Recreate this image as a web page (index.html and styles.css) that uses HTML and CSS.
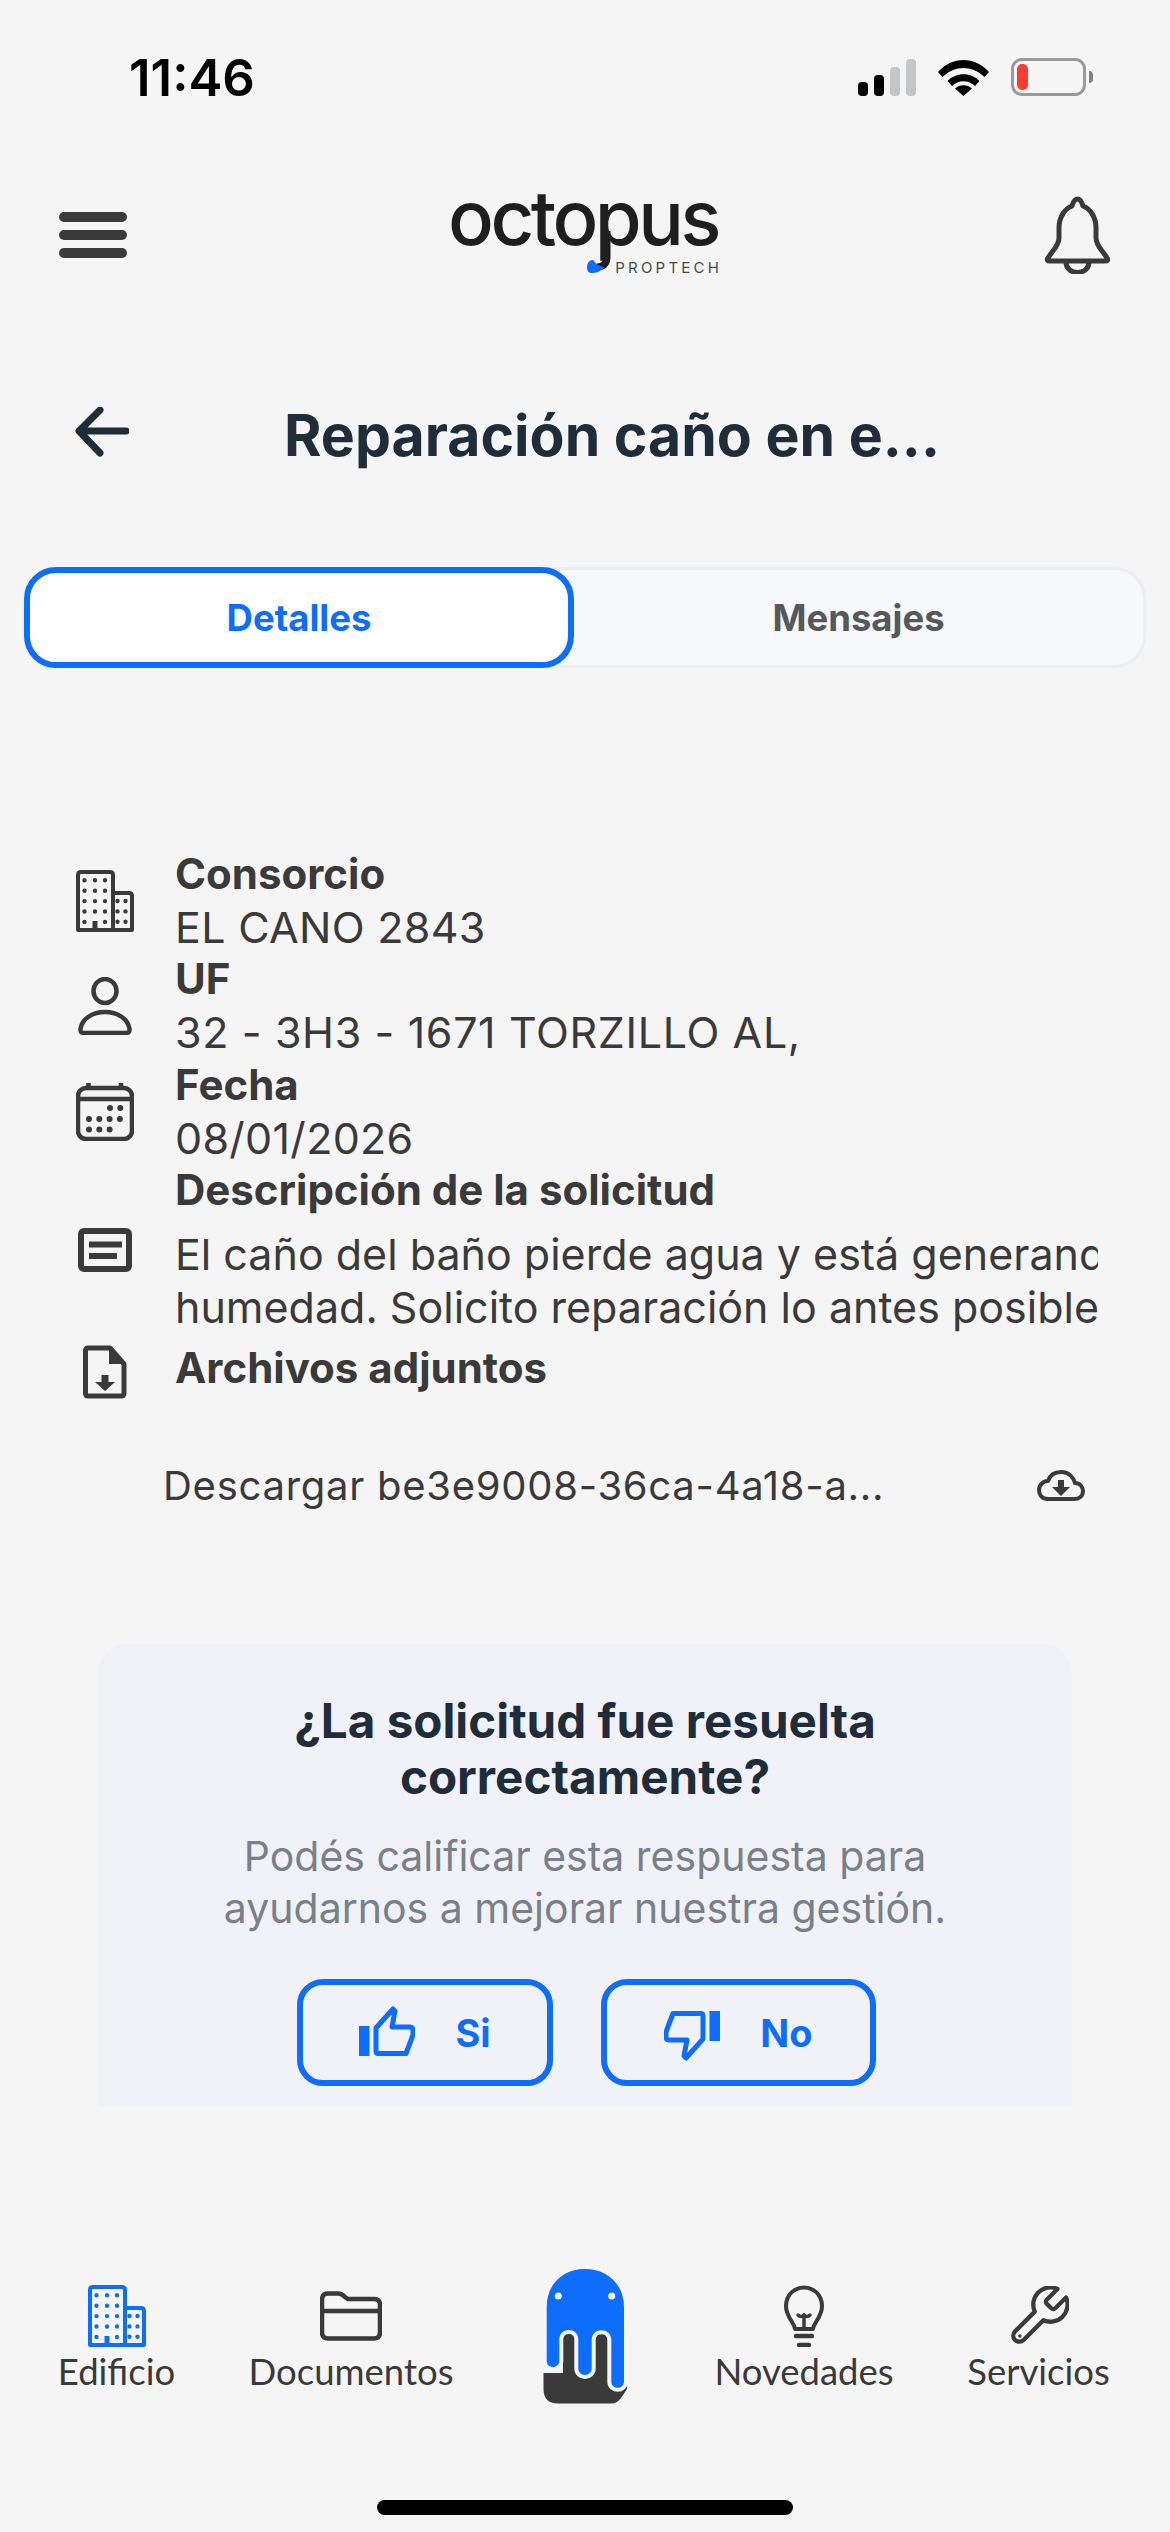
FILE: index.html
```html
<!DOCTYPE html>
<html lang="es">
<head>
    <meta charset="UTF-8">
    <meta name="viewport" content="width=device-width, initial-scale=1.0">
    <title>Reparación caño</title>
    <link rel="stylesheet" href="styles.css">
</head>
<body>

<svg class="defs" width="0" height="0">
    <symbol id="building" viewBox="0 0 58 62">
        <g fill="none" stroke="currentColor" stroke-width="4" stroke-linejoin="round">
            <path d="M2 60V5q0-3 3-3h29q3 0 3 3v55z"/>
            <path d="M37 23h16q3 0 3 3v34H37"/>
            <path d="M2 60h54"/>
        </g>
        <g fill="none" stroke="currentColor" stroke-width="4.4" stroke-linecap="round" stroke-dasharray="0 10.4">
            <path d="M8.500 10.300V53"/>
            <path d="M19 10.300V43"/>
            <path d="M29 10.300V53"/>
            <path d="M41.500 31V53"/>
            <path d="M49.500 31V53"/>
        </g>
        <path d="M16.500 60V51h5v9z" fill="currentColor"/>
    </symbol>
</svg>

<div class="screen">

    <div class="status-bar">
        <span class="time">11:46</span>
        <div class="status-icons">
            <div class="signal">
                <span class="bar bar-1"></span>
                <span class="bar bar-2"></span>
                <span class="bar bar-3"></span>
                <span class="bar bar-4"></span>
            </div>
            <svg class="wifi" viewBox="0 0 51 37" width="51" height="37">
                <path d="M0 13C14-3 37-3 51 13l-4.500 5C34 6 17 6 4.500 18z" fill="#000"/>
                <path d="M9.500 22C18 13 33 13 41.500 22L37 27C30.500 20.500 20.500 20.500 14 27z" fill="#000"/>
                <path d="M25.500 37L17 29.500C21.500 25 29.500 25 34 29.500z" fill="#000"/>
            </svg>
            <div class="battery"><span class="battery-level"></span></div>
            <span class="battery-tip"></span>
        </div>
    </div>

    <header class="topbar">
        <div class="menu-icon"><span></span><span></span><span></span></div>
        <div class="logo">
            <span class="logo-word">octopus</span>
            <svg class="logo-tail" viewBox="0 0 28 42" width="28" height="42">
                <path d="M21 0V26C21 33 17 36 11 36" fill="none" stroke="#1e1e1e" stroke-width="7"/>
                <path d="M1 37C1 31 4 29 7 29C10 33 13 35 18 36C15 41 9 42 6 42C3 42 1 40 1 37z" fill="#0d6efd"/>
            </svg>
            <span class="logo-sub">PROPTECH</span>
        </div>
        <svg class="bell" viewBox="0 0 69 78" width="69" height="78">
            <path d="M34.500 3C38 3 39 7 40 10C48 13 53 22 53 32V42C53 50 60 55 64 62Q66 65 62 65H7Q3 65 5 62C9 55 16 50 16 42V32C16 22 21 13 29 10C30 7 31 3 34.500 3z" fill="none" stroke="#3a3a3a" stroke-width="5" stroke-linejoin="round"/>
            <path d="M23 66C23 80 46 80 46 66" fill="none" stroke="#3a3a3a" stroke-width="5"/>
        </svg>
    </header>

    <div class="title-row">
        <svg class="back" viewBox="0 0 54 50" width="54" height="50">
            <path d="M51 24H5M25 3L4 24l21 22" fill="none" stroke="#1f2d3a" stroke-width="7" stroke-linecap="round" stroke-linejoin="round"/>
        </svg>
        <h1>Reparación caño en e...</h1>
    </div>

    <div class="tabs">
        <div class="tab tab-active">Detalles</div>
        <div class="tab">Mensajes</div>
    </div>

    <div class="details">
        <div class="row">
            <div class="row-icon"><svg width="58" height="62"><use href="#building"/></svg></div>
            <div class="row-text">
                <div class="label">Consorcio</div>
                <div class="value spaced-sm">EL CANO 2843</div>
            </div>
        </div>
        <div class="row">
            <div class="row-icon">
                <svg viewBox="0 0 54 58" width="54" height="58">
                    <ellipse cx="27" cy="14" rx="11.500" ry="12" fill="none" stroke="#3a3a3a" stroke-width="4.500"/>
                    <path d="M2.500 52C4 42 14 35 27 35S50 42 51.500 52Q52 56 48 56H6Q2 56 2.500 52z" fill="none" stroke="#3a3a3a" stroke-width="4.500" stroke-linejoin="round"/>
                </svg>
            </div>
            <div class="row-text">
                <div class="label">UF</div>
                <div class="value spaced">32 - 3H3 - 1671 TORZILLO AL,</div>
            </div>
        </div>
        <div class="row">
            <div class="row-icon">
                <svg viewBox="0 0 58 58" width="58" height="58">
                    <rect x="2" y="5" width="54" height="51" rx="8" fill="none" stroke="#3a3a3a" stroke-width="4.500"/>
                    <path d="M2 16H56M12.500 0V6M45 0V6" fill="none" stroke="#3a3a3a" stroke-width="4.500"/>
                    <g fill="none" stroke="#3a3a3a" stroke-width="6" stroke-linecap="round" stroke-dasharray="0 10.300">
                        <path d="M34 25H45"/>
                        <path d="M13 36H45"/>
                        <path d="M13 46.500H35"/>
                    </g>
                </svg>
            </div>
            <div class="row-text">
                <div class="label">Fecha</div>
                <div class="value spaced-sm">08/01/2026</div>
            </div>
        </div>
        <div class="row">
            <div class="row-icon"></div>
            <div class="row-text"><div class="label">Descripción de la solicitud</div></div>
        </div>
        <div class="row row-desc">
            <div class="row-icon">
                <svg viewBox="0 0 54 44" width="54" height="44">
                    <rect x="3" y="3" width="48" height="38" rx="3" fill="none" stroke="#3a3a3a" stroke-width="6"/>
                    <path d="M11 16.500H44M11 28H39" fill="none" stroke="#3a3a3a" stroke-width="6"/>
                </svg>
            </div>
            <div class="row-text">
                <div class="value clipped">El caño del baño pierde agua y está generando</div>
                <div class="value clipped">humedad. Solicito reparación lo antes posible.</div>
            </div>
        </div>
        <div class="row row-files">
            <div class="row-icon">
                <svg viewBox="0 0 44 54" width="44" height="54">
                    <path d="M5 3H27L41 19V48Q41 51 38 51H5Q2.500 51 2.500 48V6Q2.500 3 5 3z" fill="none" stroke="#3a3a3a" stroke-width="5" stroke-linejoin="round"/>
                    <path d="M26 3L41 19H26z" fill="#3a3a3a"/>
                    <path d="M18.500 30H25.500V37H32L22 46L12 37H18.500z" fill="#3a3a3a"/>
                </svg>
            </div>
            <div class="row-text"><div class="label">Archivos adjuntos</div></div>
        </div>
    </div>

    <div class="download">
        <span>Descargar be3e9008-36ca-4a18-a...</span>
        <svg viewBox="0 0 48 32" width="48" height="32">
            <path d="M13 29H11C5 29 2 25 2 20C2 15 6 11 11 11C13 5 18 2 24 2C32 2 37 8 38 13C43 13 46 17 46 21C46 26 42 29 37 29z" fill="none" stroke="#3a3a3a" stroke-width="4" stroke-linejoin="round"/>
            <path d="M21 10H27V17H33L24 26L15 17H21z" fill="#3a3a3a"/>
        </svg>
    </div>

    <section class="rating">
        <h2>¿La solicitud fue resuelta<br>correctamente?</h2>
        <p>Podés calificar esta respuesta para<br>ayudarnos a mejorar nuestra gestión.</p>
        <div class="rating-buttons">
            <button class="rate-btn rate-yes">
                <svg viewBox="0 0 56 50" width="56" height="50">
                    <path d="M0 20H10.500V50H0z" fill="#0d6efd"/>
                    <path d="M17 22L34 3L36 5L33 21H51Q54 21 54 25V29L47 47.500H19Q17 47.500 17 45z" fill="none" stroke="#0d6efd" stroke-width="5" stroke-linejoin="round"/>
                </svg>
                <span>Si</span>
            </button>
            <button class="rate-btn rate-no">
                <svg class="flip" viewBox="0 0 56 50" width="56" height="50">
                    <path d="M0 20H10.500V50H0z" fill="#0d6efd"/>
                    <path d="M17 22L34 3L36 5L33 21H51Q54 21 54 25V29L47 47.500H19Q17 47.500 17 45z" fill="none" stroke="#0d6efd" stroke-width="5" stroke-linejoin="round"/>
                </svg>
                <span>No</span>
            </button>
        </div>
    </section>

    <nav class="bottom-nav">
        <div class="nav-item nav-active">
            <div class="nav-icon"><svg width="58" height="62"><use href="#building"/></svg></div>
            <span>Edificio</span>
        </div>
        <div class="nav-item">
            <div class="nav-icon">
                <svg viewBox="0 0 62 50" width="62" height="50">
                    <path d="M2 41V9Q2 2.500 8 2.500H18Q22 2.500 25 6L28 8H54Q60 8 60 14V41Q60 47.500 54 47.500H8Q2 47.500 2 41z" fill="none" stroke="#3a3a3a" stroke-width="4.500"/>
                    <path d="M2 20H60" fill="none" stroke="#3a3a3a" stroke-width="4.500"/>
                </svg>
            </div>
            <span>Documentos</span>
        </div>
        <div class="nav-item nav-mascot">
            <svg viewBox="0 0 84 135" width="84" height="135">
                <path d="M0.500 104V120Q0.500 134.500 15 134.500H68Q74 134.500 78 129L84 120V60H20V104z" fill="#3a3a3a"/>
                <path d="M3.700 38C3.700 15 20 0 42 0C64 0 81 15 81 38V112.400C81 120.800 68.300 120.800 68.300 112.400V71C68.300 58 48.700 58 48.700 71V99.300C48.700 108.200 35.300 108.200 35.300 99.300V70.500C35.300 57.800 16.300 57.800 16.300 70.500V91.700C16.300 100 3.700 100 3.700 91.700z" fill="#0d6efd" stroke="#f5f5f5" stroke-width="8" paint-order="stroke"/>
                <circle cx="15.300" cy="27" r="3.500" fill="#f5f5f5"/>
                <circle cx="68.700" cy="27" r="3.500" fill="#f5f5f5"/>
            </svg>
        </div>
        <div class="nav-item">
            <div class="nav-icon">
                <svg viewBox="0 0 42 62" width="42" height="62">
                    <path d="M12 44C11 37 3 32 3 21C3 10 11 2.500 21 2.500S39 10 39 21C39 32 31 37 30 44z" fill="none" stroke="#3a3a3a" stroke-width="4" stroke-linejoin="round"/>
                    <path d="M15 30Q18 33 21 30Q24 33 27 30M21 31V44" fill="none" stroke="#3a3a3a" stroke-width="3.500" stroke-linecap="round"/>
                    <path d="M13 51H29M16 60H26" fill="none" stroke="#3a3a3a" stroke-width="4.500" stroke-linecap="round"/>
                </svg>
            </div>
            <span>Novedades</span>
        </div>
        <div class="nav-item">
            <div class="nav-icon">
                <svg viewBox="1.500 1.500 21 21" width="60" height="60">
                    <path d="M14.700 6.300a1 1 0 0 0 0 1.400l1.600 1.600a1 1 0 0 0 1.400 0l3.770-3.770a6 6 0 0 1-7.940 7.940l-6.910 6.910a2.120 2.120 0 0 1-3-3l6.910-6.910a6 6 0 0 1 7.940-7.940l-3.760 3.760z" fill="none" stroke="#3a3a3a" stroke-width="1.500" stroke-linejoin="round"/>
                    <circle cx="5.300" cy="19" r=".6" fill="#3a3a3a"/>
                </svg>
            </div>
            <span>Servicios</span>
        </div>
    </nav>

    <div class="home-bar"></div>

</div>

</body>
</html>
```

FILE: styles.css
```css
* {
    box-sizing: border-box;
}
html, body {
    margin: 0;
    padding: 0;
}
body {
    font-family: Inter, "Liberation Sans", sans-serif;
    background: #f5f5f5;
    color: #3a3a3a;
    width: 1170px;
    height: 2532px;
    overflow: hidden;
}
.defs {
    position: absolute;
}
.screen {
    display: flex;
    flex-direction: column;
    height: 2532px;
}

/* status bar */
.status-bar {
    height: 195px;
    padding: 49px 77px 0 129px;
    display: flex;
    justify-content: space-between;
    align-items: flex-start;
}
.time {
    font-size: 51px;
    font-weight: 600;
    line-height: 58px;
    color: #000;
}
.status-icons {
    display: flex;
    align-items: flex-end;
    height: 38px;
    margin-top: 9px;
}
.signal {
    display: flex;
    align-items: flex-end;
    gap: 6px;
    margin-right: 22px;
}
.bar {
    width: 10px;
    border-radius: 4px;
    background: #000;
}
.bar-1 { height: 14px; }
.bar-2 { height: 21px; }
.bar-3 { height: 29px; background: #c4c5c7; }
.bar-4 { height: 37px; background: #c4c5c7; }
.wifi {
    margin-right: 22px;
}
.battery {
    width: 75px;
    height: 38px;
    border: 3px solid #98999b;
    border-radius: 11px;
    padding: 3px;
}
.battery-level {
    display: block;
    width: 11px;
    height: 26px;
    background: #ff3b30;
    border-radius: 5px;
}
.battery-tip {
    width: 4px;
    height: 12px;
    background: #7e8185;
    border-radius: 0 6px 6px 0;
    margin: 0 0 13px 3px;
}

/* header */
.topbar {
    height: 80px;
    padding: 0 58px 0 59px;
    display: flex;
    justify-content: space-between;
    align-items: center;
}
.menu-icon {
    width: 68px;
    display: flex;
    flex-direction: column;
    gap: 8px;
}
.menu-icon span {
    display: block;
    height: 10px;
    background: #3a3a3a;
    border-radius: 5px;
}
.logo {
    position: relative;
    width: 268px;
    height: 80px;
}
.logo-word {
    display: block;
    font-size: 76px;
    font-weight: 500;
    letter-spacing: -3.5px;
    line-height: 76px;
    color: #1e1e1e;
    margin: -16px 0 0 -3px;
}
.logo-tail {
    position: absolute;
    left: 135px;
    top: 36px;
}
.logo-sub {
    position: absolute;
    right: 0;
    top: 65px;
    font-size: 15px;
    line-height: 15px;
    letter-spacing: 3.2px;
    margin-right: -3px;
    color: #4a4a4a;
}

/* title */
.title-row {
    margin-top: 126px;
    height: 70px;
    position: relative;
    display: flex;
    justify-content: center;
    align-items: center;
}
.back {
    position: absolute;
    left: 75px;
    top: 6px;
}
h1 {
    margin: 0 0 0 54px;
    font-size: 57.200px;
    font-weight: 700;
    color: #1f2d3a;
    line-height: 70px;
    white-space: nowrap;
}

/* tabs */
.tabs {
    margin: 96px 24px 0;
    height: 101px;
    display: flex;
    background: #f6f8fa;
    border: 3px solid #eceef1;
    border-radius: 32px;
}
.tab {
    flex: 1;
    display: flex;
    align-items: center;
    justify-content: center;
    font-size: 36.500px;
    font-weight: 700;
    color: #55585c;
}
.tab-active {
    flex: 0 0 550px;
    margin: -3px 0 -3px -3px;
    background: #fff;
    border: 6px solid #0d6efd;
    border-radius: 32px;
    color: #0d6efd;
}

/* details */
.details {
    margin-top: 180px;
    padding-right: 72px;
}
.row {
    display: flex;
    align-items: center;
}
.row-icon {
    flex: 0 0 175px;
    padding-left: 76px;
    padding-right: 41px;
    display: flex;
    justify-content: center;
}
.row-text {
    min-width: 0;
    flex: 1;
}
.label {
    font-size: 42px;
    font-weight: 700;
    line-height: 52.700px;
}
.value {
    font-size: 43px;
    font-weight: 400;
    line-height: 52.700px;
}
.spaced-sm {
    letter-spacing: .3px;
}
.spaced {
    letter-spacing: .63px;
}
.clipped {
    white-space: nowrap;
    overflow: hidden;
}
.row-desc {
    margin-top: 11px;
    align-items: flex-start;
}
.row-files {
    margin-top: 9px;
    align-items: flex-start;
}
.row-files .row-icon {
    padding-top: 3px;
}

/* download */
.download {
    margin-top: 62px;
    padding: 0 85px 0 163px;
    display: flex;
    justify-content: space-between;
    align-items: center;
    font-size: 40px;
    line-height: 50px;
}
.download span {
    letter-spacing: .73px;
}

/* rating card */
.rating {
    margin: 133px 98px 0;
    height: 462px;
    padding-top: 49px;
    background: #f0f2f7;
    border-radius: 30px 30px 0 0;
    text-align: center;
}
h2 {
    margin: 0;
    font-size: 47.600px;
    font-weight: 700;
    line-height: 56px;
    color: #1f2d3a;
}
.rating p {
    margin: 25px 0 0;
    font-size: 41px;
    line-height: 52px;
    color: #7a8087;
}
.rating-buttons {
    margin-top: 45px;
    display: flex;
    gap: 48px;
    margin-left: 199px;
}
.rate-btn {
    height: 107px;
    background: none;
    border: 6px solid #0d6efd;
    border-radius: 26px;
    display: flex;
    align-items: center;
    justify-content: center;
    gap: 40px;
    padding: 0;
    font-family: inherit;
    font-size: 38px;
    font-weight: 700;
    color: #0d6efd;
}
.rate-yes {
    width: 256px;
}
.rate-yes svg {
    margin-bottom: 3px;
}
.rate-no {
    width: 275px;
}
.flip {
    transform: rotate(180deg);
    margin-top: 7px;
}

/* bottom nav */
.bottom-nav {
    margin-top: 163px;
    display: grid;
    grid-template-columns: 233px 236px 232px 206px 263px;
    height: 135px;
}
.nav-item {
    display: flex;
    flex-direction: column;
    align-items: center;
    padding-top: 15px;
    font-family: Lato, "Noto Sans", sans-serif;
    font-size: 36.500px;
    line-height: 46px;
}
.nav-icon {
    height: 64px;
    display: flex;
    align-items: center;
}
.nav-item svg {
    display: block;
}
.nav-active .nav-icon {
    color: #0d6efd;
}
.nav-mascot {
    padding-top: 0;
}

.home-bar {
    width: 416px;
    height: 15px;
    margin: 96px auto 0;
    background: #000;
    border-radius: 8px;
}
```
